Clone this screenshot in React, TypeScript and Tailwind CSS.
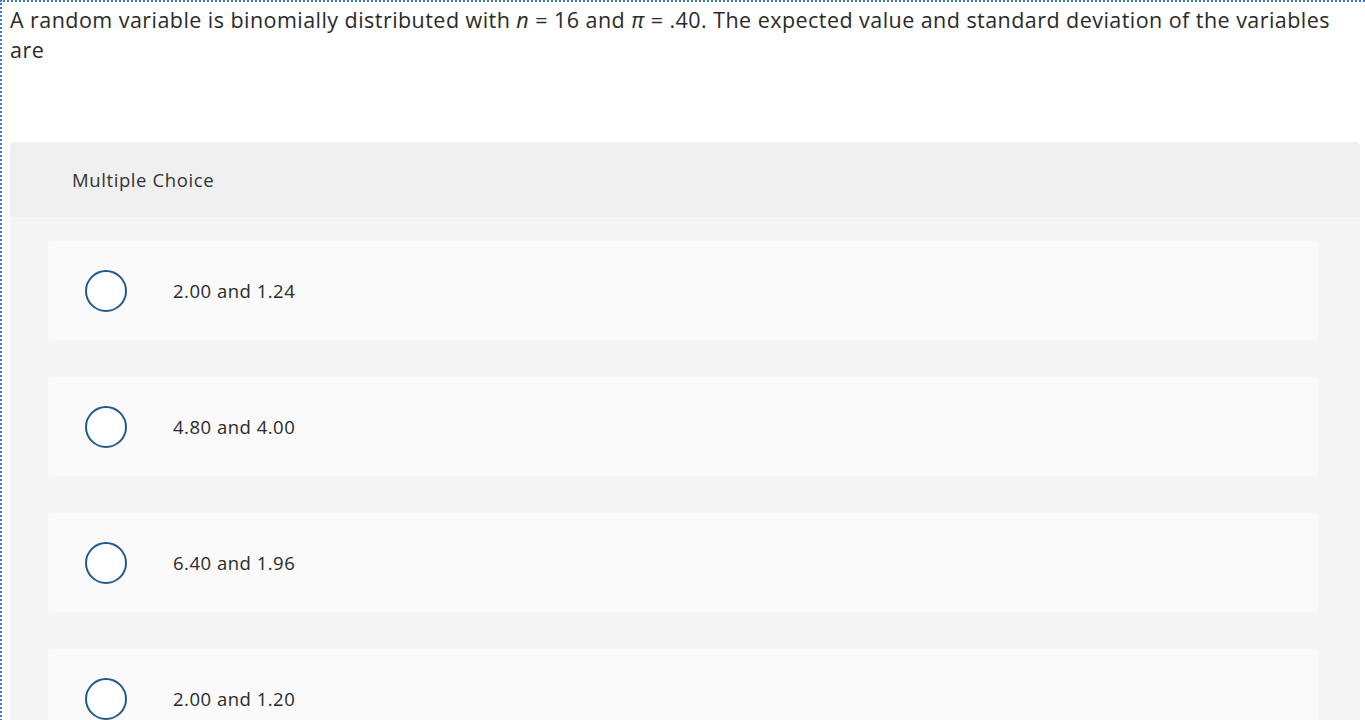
import React from "react";

const choices = ["2.00 and 1.24", "4.80 and 4.00", "6.40 and 1.96", "2.00 and 1.20"];

export default function App() {
  return (
    <div className="h-[720px] w-[1365px] overflow-hidden bg-white" style={{ fontFamily: "'Open Sans', sans-serif" }}>
      <div className="w-[1400px] border-l-2 border-t-2 border-dotted border-[#3b78c7] pl-[8px] pt-[3px]">
        <p className="w-[1340px] text-[21.5px] leading-[30px] tracking-[0.45px] text-[#2a2a2a]">
          A random variable is binomially distributed with <i>n</i> = 16 and <i>π</i> = .40. The expected value and standard deviation of the variables are
        </p>
        <div className="mt-[77px] w-[1350px] rounded-t-[5px] bg-[#f5f5f5]">
          <div className="flex h-[75px] items-center rounded-t-[5px] bg-[#f0f0f0] pl-[62px] text-[18.5px] tracking-[0.6px] text-[#333]">
            Multiple Choice
          </div>
          <div className="flex flex-col gap-[37px] pl-[38px] pr-[42px] pt-[24px]">
            {choices.map((c) => (
              <div key={c} className="flex h-[99px] items-center rounded-[4px] bg-[#fafafa]">
                <div className="ml-[37px] h-[42px] w-[42px] rounded-full border-2 border-[#1f5a8e] bg-white" />
                <span className="ml-[46px] text-[18.5px] tracking-[0.5px] text-[#2a2a2a]">{c}</span>
              </div>
            ))}
          </div>
        </div>
      </div>
    </div>
  );
}
